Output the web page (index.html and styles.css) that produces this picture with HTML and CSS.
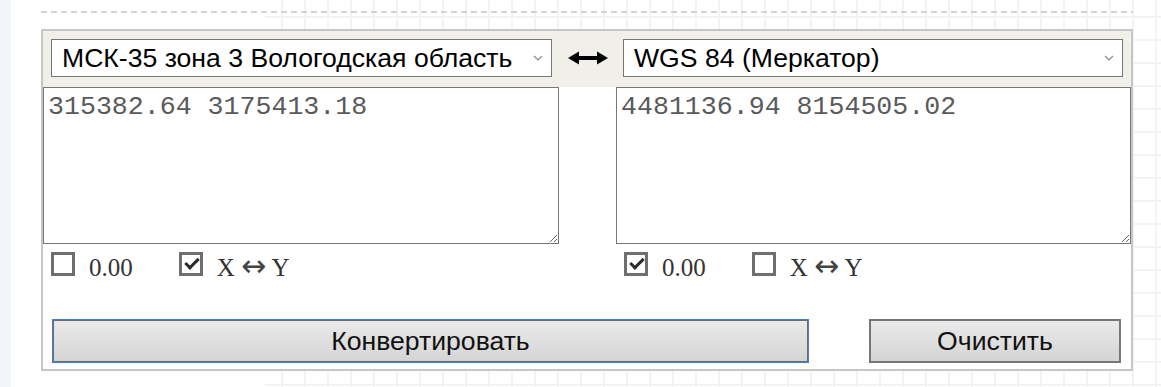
FILE: index.html
```html
<!DOCTYPE html>
<html>
<head>
<meta charset="utf-8" />
<title>Конвертер координат</title>
<meta name="viewport" content="width=device-width, initial-scale=1">
<link rel="stylesheet" href="styles.css">
</head>

<body>
<div class="page">
  <aside class="rail"></aside>

  <main class="content">
    <div class="divider"></div>

    <form name="convert" class="converter">
      <div class="converter-head">
        <label class="picker picker-from">
          <select name="from" class="select">
            <option>МСК-35 зона 3 Вологодская область</option>
          </select>
          <svg class="chevron" width="10" height="6" viewBox="0 0 10 6"><path d="M1 1l4 4 4-4" fill="none" stroke="#8a8a8a" stroke-width="1.2"/></svg>
        </label>

        <span class="swap" title="Поменять местами">
          <svg width="40" height="14" viewBox="0 0 40 14">
            <path d="M8 5h24v4H8z" fill="#000"/>
            <path d="M0 7l11-6.5v13z" fill="#000"/>
            <path d="M40 7l-11-6.5v13z" fill="#000"/>
          </svg>
        </span>

        <label class="picker picker-to">
          <select name="to" class="select">
            <option>WGS 84 (Меркатор)</option>
          </select>
          <svg class="chevron" width="10" height="6" viewBox="0 0 10 6"><path d="M1 1l4 4 4-4" fill="none" stroke="#8a8a8a" stroke-width="1.2"/></svg>
        </label>
      </div>

      <div class="converter-fields">
        <div class="side">
          <textarea name="source" class="coords" spellcheck="false">315382.64 3175413.18</textarea>
          <div class="opts">
            <label class="opt"><input type="checkbox" class="checkbox" name="srcRound"><span class="box"></span><span class="opt-text">0.00</span></label>
            <label class="opt"><input type="checkbox" class="checkbox" name="srcSwap" checked><span class="box"></span><span class="opt-text">X <span class="arrow">↔</span> Y</span></label>
          </div>
        </div>

        <div class="side">
          <textarea name="result" class="coords" spellcheck="false">4481136.94 8154505.02</textarea>
          <div class="opts">
            <label class="opt"><input type="checkbox" class="checkbox" name="dstRound" checked><span class="box"></span><span class="opt-text">0.00</span></label>
            <label class="opt"><input type="checkbox" class="checkbox" name="dstSwap"><span class="box"></span><span class="opt-text">X <span class="arrow">↔</span> Y</span></label>
          </div>
        </div>
      </div>

      <div class="converter-actions">
        <button type="submit" class="btn btn-convert">Конвертировать</button>
        <button type="reset" class="btn btn-clear">Очистить</button>
      </div>
    </form>
  </main>
</div>
</body>
</html>
```

FILE: styles.css
```css
html, body {
  margin: 0;
  height: 100%;
}

body {
  font-family: 'Liberation Sans', Arial, sans-serif;
  color: #000;
  background: #fff;
}

.page {
  display: flex;
  min-height: 100%;
}

.rail {
  width: 11px;
  flex-shrink: 0;
  background-color: #f2f6f9;
}

/* faint graph paper behind the tool, hidden on the left part */
.content {
  flex: 1;
  padding: 11px 0 0 30px;
  background-color: #fff;
  background-image:
    linear-gradient(to right, #fff 254px, transparent 254px),
    linear-gradient(to right, #f3f3f3 2px, transparent 2px),
    linear-gradient(to bottom, #f3f3f3 2px, transparent 2px);
  background-size: 100% 100%, 23px 23px, 23px 23px;
  background-position: 0 0, 17px 0, 0 16px;
}

.divider {
  width: 1092px;
  height: 2px;
  background: repeating-linear-gradient(to right, #d2d2d2 0 6px, transparent 6px 10px);
}

.converter {
  box-sizing: border-box;
  width: 1092px;
  margin-top: 16px;
  border: 2px solid #c6c6c6;
  background: #fff;
}

.converter-head {
  display: flex;
  align-items: center;
  padding: 8px 8px 10px;
  background-color: #f0f0e8;
}

.picker {
  position: relative;
  display: block;
}

.picker-from {
  width: 501px;
}

.picker-to {
  width: 500px;
}

.select {
  appearance: none;
  -webkit-appearance: none;
  display: block;
  box-sizing: border-box;
  width: 100%;
  height: 38px;
  margin: 0;
  padding: 0 30px 0 10px;
  border: 1px solid #767676;
  border-radius: 0;
  background: #fff;
  color: #000;
  font-family: 'Liberation Sans', Arial, sans-serif;
  font-size: 26.6px;
  outline: none;
}

.chevron {
  position: absolute;
  right: 9px;
  top: 16px;
  pointer-events: none;
}

.swap {
  flex: 1;
  display: flex;
  justify-content: center;
  align-items: center;
}

.converter-fields {
  display: grid;
  grid-template-columns: 516px 1fr;
  column-gap: 57px;
}

.coords {
  display: block;
  box-sizing: border-box;
  width: 100%;
  height: 157px;
  margin: 0;
  padding: 4px 4px;
  border: 1px solid #767676;
  border-radius: 0;
  color: #5a5a5a;
  font-family: 'Liberation Mono', 'Courier New', monospace;
  font-size: 26.6px;
  line-height: 1.15;
  outline: none;
}

.opts {
  display: flex;
  gap: 46px;
  margin-top: 8px;
  padding-left: 8px;
}

.opt {
  display: flex;
  align-items: flex-start;
  gap: 14px;
  height: 24px;
  cursor: pointer;
}

.checkbox {
  position: absolute;
  left: -99999px;
  opacity: 0;
}

.box {
  position: relative;
  box-sizing: border-box;
  width: 24px;
  height: 24px;
  border: 3px solid #6e6e6e;
  background: #fff;
}

/* checkmark of the fake checkbox */
.checkbox:checked + .box::after {
  content: "";
  position: absolute;
  left: 3px;
  top: 3px;
  width: 11px;
  height: 5px;
  border-left: 3px solid #2b2b2b;
  border-bottom: 3px solid #2b2b2b;
  transform: rotate(-45deg);
}

.opt-text {
  font-family: 'Liberation Serif', 'Times New Roman', serif;
  font-size: 25px;
  line-height: 32px;
  color: #333;
  white-space: nowrap;
}

.arrow {
  font-family: 'DejaVu Sans', sans-serif;
  font-size: 30px;
  line-height: 0;
  color: #444;
}

.converter-actions {
  display: flex;
  justify-content: space-between;
  margin-top: 43px;
  padding: 0 10px 6px 9px;
}

.btn {
  box-sizing: border-box;
  height: 44px;
  margin: 0;
  padding: 0;
  border: 2px solid #767676;
  border-radius: 0;
  background: linear-gradient(to bottom, #eaeaea, #d4d4d4);
  color: #111;
  font-family: 'Liberation Sans', Arial, sans-serif;
  font-size: 26.6px;
  cursor: pointer;
}

.btn-convert {
  width: 757px;
  border: 1px solid #3f7fe0;
  box-shadow: inset 0 0 0 1px #6c6c6c;
}

.btn-clear {
  width: 252px;
}
```
